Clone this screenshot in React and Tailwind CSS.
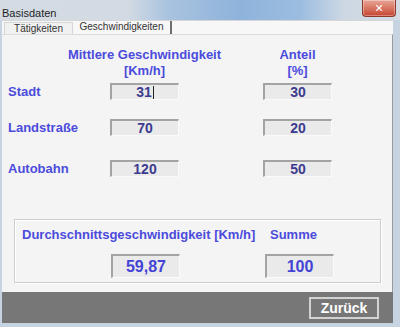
import React from 'react';

const font = "font-['Liberation_Sans',sans-serif]";

// Sunken value field as in the old Access/VBA forms
const Field = ({ value, cursor, big }) => (
  <div
    className={`flex items-center justify-center bg-[#eaeaea] border-t-2 border-l-2 border-t-[#a3a3a3] border-l-[#a3a3a3] border-b border-r border-b-[#fafafa] border-r-[#fafafa] font-bold ${
      big ? 'h-[24px] text-[16px] text-[#4343d6]' : 'h-[17px] text-[14px] text-[#3c3c8e]'
    }`}
  >
    <span className="leading-none">{value}</span>
    {cursor && <span className="w-px h-[13px] bg-[#222] ml-px" />}
  </div>
);

const rows = [
  { label: 'Stadt', speed: '31', share: '30', mt: 'mt-[4px]', cursor: true },
  { label: 'Landstraße', speed: '70', share: '20', mt: 'mt-[19px]' },
  { label: 'Autobahn', speed: '120', share: '50', mt: 'mt-[24px]' }
];

export default function App() {
  return (
    <div className={`relative w-[400px] h-[327px] overflow-hidden bg-[#c6d3e1] flex flex-col ${font}`}>
      {/* title bar */}
      <div className="h-[20px] bg-[linear-gradient(90deg,#d4dbe3_0%,#d2dae3_32%,#a9c3df_42%,#8eb3db_60%,#9cbde0_75%,#cdd8e4_86%,#d4dbe3_100%)]">
        <span className="pl-[2px] text-[11px] leading-[19px] text-[#1f1f1f]">Basisdaten</span>
      </div>
      <div className="absolute top-0 right-[4px] w-[34px] h-[17px] rounded-b-[4px] border border-t-0 border-[#8b3a2d] bg-gradient-to-b from-[#e8a597] to-[#c5432f] flex items-center justify-center shadow-[inset_0_0_0_1px_rgba(255,255,255,0.35)]">
        <span className="text-white font-bold text-[11px] leading-none font-['DejaVu_Sans',sans-serif]">✕</span>
      </div>

      <div className="ml-[2px] w-[391px] flex flex-col">
        {/* tabs */}
        <div className="h-[14px] bg-[#f7f7f7] border-t border-[#d6d6d6] flex items-end">
          <div className="ml-[2px] w-[69px] h-[12px] border border-b-0 border-[#d6d6d6] bg-[#f1f1f1] text-[10px] leading-[12px] text-[#333] text-center">
            Tätigkeiten
          </div>
          <div className="w-[99px] h-[13px] border-r-2 border-[#6e6e6e] text-[10px] leading-[11px] text-[#333] text-center">
            Geschwindigkeiten
          </div>
        </div>

        {/* page */}
        <div className="h-[258px] bg-[#f4f4f4] border-t border-[#dcdcdc] border-r border-r-[#9a9a9a] pt-[12px] pl-[6px]">
          <div className="grid grid-cols-[102px_69px_84px_69px] text-[13px] font-bold leading-[16px] text-[#4b4bdc]">
            <div />
            <div className="flex flex-col items-center whitespace-nowrap">
              <span>Mittlere Geschwindigkeit</span>
              <span>[Km/h]</span>
            </div>
            <div />
            <div className="flex flex-col items-center whitespace-nowrap">
              <span>Anteil</span>
              <span>[%]</span>
            </div>
          </div>

          {rows.map((r) => (
            <div key={r.label} className={`grid grid-cols-[102px_69px_84px_69px] items-center h-[17px] ${r.mt}`}>
              <span className="text-[13px] leading-[17px] font-bold text-[#4b4bdc]">{r.label}</span>
              <Field value={r.speed} cursor={r.cursor} />
              <div />
              <Field value={r.share} />
            </div>
          ))}

          {/* result frame */}
          <div className="mt-[42px] ml-[6px] w-[367px] h-[64px] border border-[#cdcdcd] shadow-[1px_1px_0_#ffffff,inset_1px_1px_0_#ffffff] pt-[7px]">
            <div className="flex text-[13px] font-bold leading-[16px] text-[#4b4bdc] whitespace-nowrap">
              <span className="w-[255px] pl-[7px]">Durchschnittsgeschwindigkeit [Km/h]</span>
              <span>Summe</span>
            </div>
            <div className="flex mt-[11px]">
              <div className="ml-[96px] w-[69px]">
                <Field value="59,87" big />
              </div>
              <div className="ml-[85px] w-[69px]">
                <Field value="100" big />
              </div>
            </div>
          </div>
        </div>

        {/* footer */}
        <div className="h-[31px] bg-[#777777] flex items-center justify-end pr-[14px]">
          <button className="w-[70px] h-[22px] border-2 border-[#d2d2d2] text-white font-bold text-[14px] leading-none">
            Zurück
          </button>
        </div>
      </div>
    </div>
  );
}
